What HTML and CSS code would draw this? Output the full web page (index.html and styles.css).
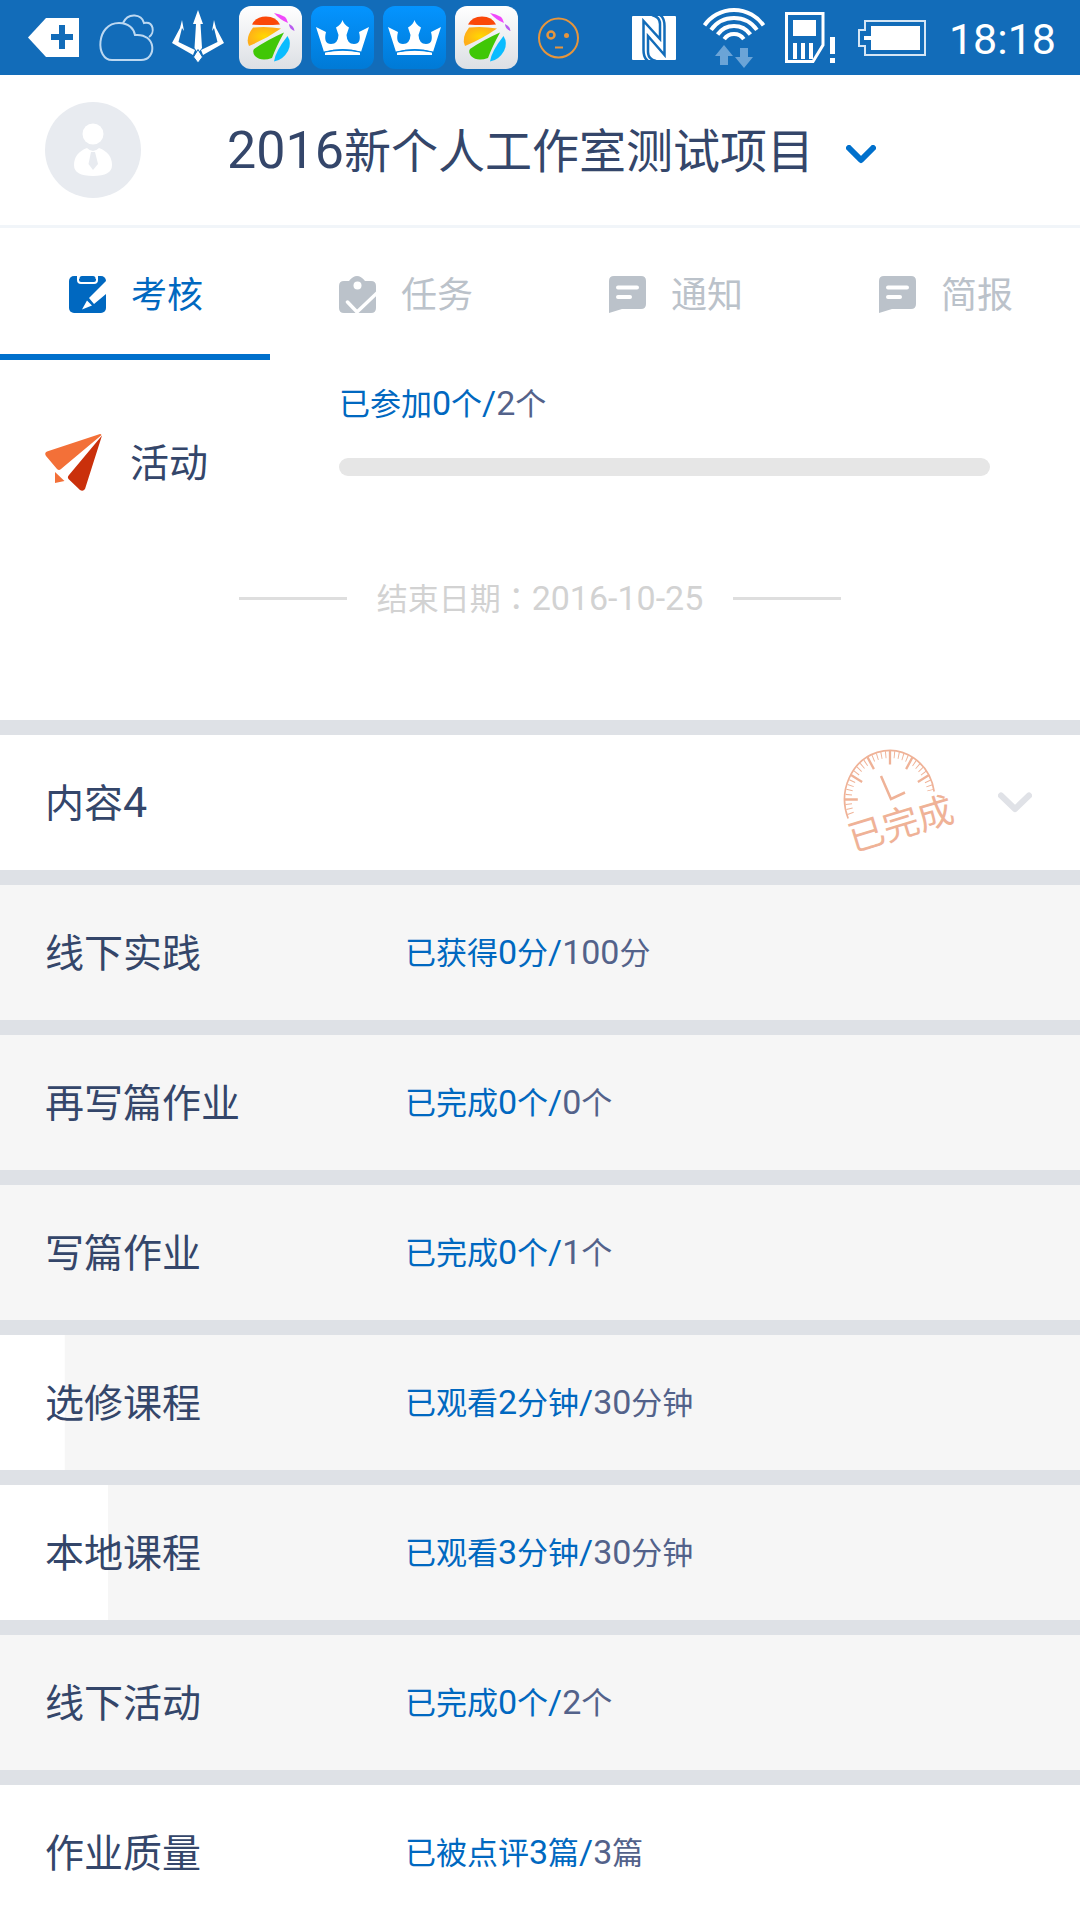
FILE: index.html
```html
<!DOCTYPE html>
<html lang="zh-CN">
<head>
<meta charset="utf-8">
<meta name="viewport" content="width=device-width, initial-scale=1">
<title>2016新个人工作室测试项目</title>
<link rel="stylesheet" href="styles.css">
</head>
<body>
<svg class="defs" width="0" height="0" aria-hidden="true">
  <defs>
    <linearGradient id="tile-light" x1="0" y1="0" x2="0" y2="1"><stop offset="0" stop-color="#ffffff"/><stop offset="1" stop-color="#dcdfe4"/></linearGradient>
    <linearGradient id="tile-blue" x1="0" y1="0" x2="0" y2="1"><stop offset="0" stop-color="#0494ff"/><stop offset="1" stop-color="#007ad6"/></linearGradient>
    <radialGradient id="ball-yellow"><stop offset="0" stop-color="#ffd800"/><stop offset="1" stop-color="#ffae1a"/></radialGradient>
    <symbol id="ball" viewBox="0 0 63 63">
      <rect width="63" height="63" rx="12" fill="url(#tile-light)"/>
      <path d="M13 18.500Q17 10.500 27 10.500T41 18.500Q27 19.500 13 18.500Z" fill="#fb4708"/>
      <path d="M35 7Q48 9 49 17Q41 14 35 7Z" fill="#f048fb"/>
      <path d="M50 18Q55 20 55.500 25Q50 23 50 18Z" fill="#b95cf0"/>
      <path d="M14 21.500Q28 20 42 22.500Q27 33 10 40Q6 32 14 21.500Z" fill="url(#ball-yellow)"/>
      <path d="M45 26.500Q28 34 15 43Q13 46 16 50Q22 56 33 52Q37 41 45 26.500Z" fill="#40c706"/>
      <path d="M48.500 30Q53 37 49 45Q44 54 35 55.500Q36 46 48.500 30Z" fill="#0abcff"/>
    </symbol>
    <symbol id="crown" viewBox="0 0 63 63">
      <rect width="63" height="63" rx="12" fill="url(#tile-blue)"/>
      <path d="M5 21L15 26Q12 38 20 38Q27 38 27.500 29L25 21.500Q30 19 31.500 14Q33 19 38 21.500L35.500 29Q36 38 43 38Q51 38 48 26L58 21L50 46Q32 40 13 46Z" fill="#fff"/>
      <path d="M14 49V46.500Q32 43 49 46.500V49Z" fill="#fff"/>
      <path d="M13 46Q32 41.500 50 46" fill="none" stroke="#0083e4" stroke-width="1"/>
    </symbol>
    <symbol id="message" viewBox="0 0 37 37">
      <path d="M5 0H32Q37 0 37 5V28Q37 33 32 33H13L0 37V5Q0 0 5 0Z" fill="currentColor"/>
      <path d="M9 11.500H28M9 21H21" stroke="#fff" stroke-width="4" stroke-linecap="round"/>
    </symbol>
  </defs>
</svg>

<div class="statusbar">
  <div class="notices">
    <svg class="notice" viewBox="0 0 63 63"><path d="M5 31.500L23 12H56V51H23Z" fill="#fff"/><path d="M28 31H50M39 19V43" stroke="#126cb9" stroke-width="6"/></svg>
    <svg class="notice" viewBox="0 0 63 63" fill="none" stroke="#bcd8f1" stroke-width="2"><path d="M17 54C0 54 1 17 24 17C34 17 39 23 40 29C62 27 62 54 46 54Z"/><path d="M28 17C33 6 47 8 49 17C59 15 60 27 54 31"/></svg>
    <svg class="notice" viewBox="0 0 63 63" fill="#fff"><path d="M31 4L36 18H33.500L35 42L31 47L27.500 42L29 18H26Z"/><path d="M15 14L17 25L15 22L11.500 36L28 44L26 49L5 37L13 22L13.500 20Z"/><path d="M47 14L45 25L47 22L50.500 36L34 44L36 49L57 37L49 22L48.500 20Z"/><path d="M31 43.500L35.500 51L31 57L26.500 51Z" stroke="#126cb9" stroke-width="1"/></svg>
    <svg class="notice"><use href="#ball"/></svg>
    <svg class="notice"><use href="#crown"/></svg>
    <svg class="notice"><use href="#crown"/></svg>
    <svg class="notice"><use href="#ball"/></svg>
    <svg class="notice" viewBox="0 0 63 63" fill="none" stroke="#e6953c" stroke-width="2"><circle cx="31.500" cy="32" r="19.500"/><circle cx="24" cy="29" r="3.500" stroke-width="2.500"/><circle cx="39.500" cy="29.500" r="2.500" fill="#e6953c" stroke="none"/><path d="M28 41.500H36"/></svg>
  </div>
  <div class="system">
    <svg width="51" height="44" viewBox="0 0 51 44"><rect width="44" height="44" rx="1" fill="#fff"/><path d="M20 -1Q28 1 28 8V23L11.500 5V34Q11.500 42 16 45M24 45Q16 43 16 36V20L32.500 39V10Q32.500 2 28 -1" fill="none" stroke="#126cb9" stroke-width="2.500"/></svg>
    <svg width="62" height="60" viewBox="0 0 62 60"><path d="M1.500 17.400A36 36 0 0 1 60.500 17.400M8.100 21.900A28 28 0 0 1 53.900 21.900M14.600 26.500A20 20 0 0 1 47.400 26.500M21.200 31.100A12 12 0 0 1 40.800 31.100" fill="none" stroke="#fff" stroke-width="4"/><path d="M21 37L30 48H25V57H17V48H12ZM37 40H45V49H50L41 60L32 49H37Z" fill="#6ba4d7"/></svg>
    <svg width="53" height="51" viewBox="0 0 53 51"><path d="M1.500 1.500H38V33L28 49.500H1.500Z" fill="none" stroke="#fff" stroke-width="3"/><path d="M8 8H31V24H8ZM8 31H12V47H8ZM16 31H20V47H16ZM24 31H28V47H24ZM45 25H50V42H45ZM45 46H50V51H45Z" fill="#fff"/></svg>
    <svg width="71" height="36" viewBox="0 0 71 36"><path d="M7 1H67V35H7V26H1V10H7Z" fill="none" stroke="#d5e6f5" stroke-width="2"/><path d="M13 6H62V30H13V20H6V16H13Z" fill="#fff"/></svg>
    <time class="clock">18:18</time>
  </div>
</div>

<header class="header">
  <svg class="avatar" viewBox="0 0 96 96" role="img" aria-label="头像"><circle cx="48" cy="48" r="48" fill="#e8ebf0"/><circle cx="48" cy="32" r="10.500" fill="#fff"/><path d="M42 46Q48 52 54 46Q67 51 67 63Q67 74 48 74T29 63Q29 51 42 46Z" fill="#fff"/><path d="M46 50H50L53 62L48 68L43.500 62Z" fill="#e8ebf0"/></svg>
  <button class="project" type="button">
    <span class="label"><span class="num">2016</span>新个人工作室测试项目</span>
    <svg class="project-arrow" width="30" height="19" viewBox="0 0 30 19"><path d="M3 3L15 15L27 3" fill="none" stroke="#0070cc" stroke-width="6" stroke-linecap="round" stroke-linejoin="round"/></svg>
  </button>
</header>

<nav class="tabs">
  <a class="tab active" href="#assess"><svg class="tab-icon" viewBox="0 0 37 37"><rect width="37" height="37" rx="5" fill="currentColor"/><path d="M9 -1V4Q9 7 12 7H25Q28 7 28 4V-1" fill="none" stroke="#fff" stroke-width="2"/><path d="M9 -1H28V3H9Z" fill="#fff"/><rect x="10.500" y="0" width="16" height="5" rx="2.500" fill="currentColor"/><path d="M20 22L37 5V18L25 28ZM13 33.500L18 24.500L23 29.500Z" fill="#fff"/></svg><span class="label">考核</span></a>
  <a class="tab" href="#tasks"><svg class="tab-icon" viewBox="0 0 37 37"><path d="M5 5H10Q18 -5 26 5H32Q37 5 37 10V32Q37 37 32 37H5Q0 37 0 32V10Q0 5 5 5Z" fill="currentColor"/><circle cx="18.500" cy="9.500" r="4" fill="#fff"/><path d="M8.500 26L18 36L38 17" fill="none" stroke="#fff" stroke-width="3.500" stroke-linecap="round"/></svg><span class="label">任务</span></a>
  <a class="tab" href="#notices"><svg class="tab-icon"><use href="#message"/></svg><span class="label">通知</span></a>
  <a class="tab" href="#briefs"><svg class="tab-icon"><use href="#message"/></svg><span class="label">简报</span></a>
</nav>

<main>
  <section class="activity" id="assess">
    <div class="activity-row">
      <h2 class="activity-name"><svg width="57" height="57" viewBox="0 0 57 57"><path d="M2 17.500L55 0Q57 0 56 1.500L16 35Q14 37 12 35L1 22Q-1 19 2 17.500Z" fill="#f37038"/><path d="M57 1.500L40 55Q38 58 35 56L23.500 45Q22 43 24 41Z" fill="#ca300b"/><path d="M10 38L19.500 47L10 49Z" fill="#f37038"/></svg><span class="label">活动</span></h2>
      <div class="activity-progress">
        <label class="status" for="joined"><span class="got">已参加<span class="num">0</span>个<span class="num">/</span></span><span class="num">2</span>个</label>
        <progress class="bar" id="joined" value="0" max="2"></progress>
      </div>
    </div>
    <p class="deadline"><span class="label">结束日期<span class="colon" lang="zh-Hant">：</span><span class="num">2016-10-25</span></span></p>
  </section>

  <div class="list">
    <button class="row full" type="button">
      <span class="name label">内容<span class="num">4</span></span>
      <svg class="stamp" width="120" height="116" viewBox="0 0 120 116" fill="none" stroke="#efb297">
        <g transform="translate(50 54.500) scale(.92 1)">
          <path d="M-45.500 19A49 49 0 1 1 48 -8" stroke-width="1.800"/>
          <path d="M-42.670 14.280A45 45 0 1 1 44.100 -8.970" stroke-width="7" pathLength="187" stroke-dasharray="1.300 4.700"/>
          <path d="M-49 0H-35M-42.400 -24.500L-30.300 -17.500M-24.500 -42.400L-17.500 -30.300M0 -49V-35M24.500 -42.400L17.500 -30.300M42.400 -24.500L30.300 -17.500" stroke-width="2.500"/>
        </g>
        <path d="M41 31L51 54L65 47.500" stroke-width="2.500"/>
        <text class="stamp-text" transform="translate(13 107) rotate(-17)" x="0" y="0">已完成</text>
      </svg>
      <svg width="34" height="21" viewBox="0 0 34 21"><path d="M3 3.500L17 17L31 3.500" fill="none" stroke="#e0e2e7" stroke-width="6" stroke-linecap="round" stroke-linejoin="round"/></svg>
    </button>
    <div class="row"><span class="name label">线下实践</span><span class="status"><span class="got">已获得<span class="num">0</span>分<span class="num">/</span></span><span class="num">100</span>分</span></div>
    <div class="row"><span class="name label">再写篇作业</span><span class="status"><span class="got">已完成<span class="num">0</span>个<span class="num">/</span></span><span class="num">0</span>个</span></div>
    <div class="row"><span class="name label">写篇作业</span><span class="status"><span class="got">已完成<span class="num">0</span>个<span class="num">/</span></span><span class="num">1</span>个</span></div>
    <div class="row" style="--done: 6%"><span class="name label">选修课程</span><span class="status"><span class="got">已观看<span class="num">2</span>分钟<span class="num">/</span></span><span class="num">30</span>分钟</span></div>
    <div class="row" style="--done: 10%"><span class="name label">本地课程</span><span class="status"><span class="got">已观看<span class="num">3</span>分钟<span class="num">/</span></span><span class="num">30</span>分钟</span></div>
    <div class="row"><span class="name label">线下活动</span><span class="status"><span class="got">已完成<span class="num">0</span>个<span class="num">/</span></span><span class="num">2</span>个</span></div>
    <div class="row full"><span class="name label">作业质量</span><span class="status"><span class="got">已被点评<span class="num">3</span>篇<span class="num">/</span></span><span class="num">3</span>篇</span></div>
  </div>
</main>
</body>
</html>
```

FILE: styles.css
```css
* {
  box-sizing: border-box;
}

body {
  margin: 0;
  background: #fff;
  color: #34466a;
  font-family: Roboto, "Noto Sans CJK SC", sans-serif;
}

svg {
  display: block;
  flex: none;
}

.defs {
  position: absolute;
}

button {
  border: 0;
  padding: 0;
  background: none;
  color: inherit;
  font: inherit;
  text-align: left;
}

.label {
  padding-top: 4px;
}

/* larger digits must not stretch the line they sit in */
.num {
  line-height: 0;
}

/* status bar */
.statusbar {
  display: flex;
  align-items: center;
  justify-content: space-between;
  height: 75px;
  padding: 0 24px 0 23px;
  background: #126cb9;
}

.notices {
  display: flex;
  gap: 9px;
}

.notice {
  width: 63px;
  height: 63px;
}

.system {
  display: flex;
  align-items: center;
  gap: 20px;
}

.clock {
  padding-top: 2px;
  color: #fff;
  font-size: 43px;
  line-height: 48px;
}

/* header */
.header {
  display: flex;
  align-items: center;
  gap: 86px;
  height: 153px;
  padding: 0 45px;
  border-bottom: 3px solid #f1f5f9;
}

.avatar {
  width: 96px;
  height: 96px;
}

.project {
  display: flex;
  align-items: center;
  gap: 32px;
  font-size: 47px;
  line-height: 60px;
  white-space: nowrap;
}

.project .num {
  font-size: 52px;
}

.project-arrow {
  margin-top: 8px;
}

/* tabs */
.tabs {
  display: grid;
  grid-template-columns: repeat(4, 1fr);
}

.tab {
  display: flex;
  align-items: center;
  justify-content: center;
  gap: 25px;
  height: 132px;
  padding: 6px 0 0 2px;
  border-bottom: 6px solid transparent;
  color: #bbc2ca;
  font-size: 36px;
  line-height: 48px;
  text-decoration: none;
}

.tab.active {
  border-color: #0070cc;
  color: #0068c0;
}

.tab-icon {
  width: 37px;
  height: 37px;
}

/* activity */
.activity {
  padding: 24px 90px 100px 45px;
}

.activity-row {
  display: flex;
}

.activity-name {
  display: flex;
  align-items: center;
  gap: 28px;
  flex: 0 0 294px;
  margin: 48px 0 0;
  font-size: 39px;
  font-weight: 400;
  line-height: 57px;
}

.activity-progress {
  display: flex;
  flex: 1;
  flex-direction: column;
  gap: 34px;
}

.bar {
  display: block;
  width: 100%;
  height: 18px;
  border: 0;
  border-radius: 9px;
  background: #e6e6e6;
  overflow: hidden;
  appearance: none;
}

.bar::-webkit-progress-bar {
  background: #e6e6e6;
}

.bar::-webkit-progress-value {
  background: #0070cc;
}

.status {
  padding-top: 2px;
  color: #53628a;
  font-size: 31px;
  line-height: 38px;
  white-space: nowrap;
}

.status .num,
.deadline .num {
  font-size: 34px;
}

.got {
  color: #0068c0;
}

.deadline {
  display: flex;
  align-items: center;
  justify-content: center;
  gap: 30px;
  margin: 83px -45px 0 0;
  color: #d2d2d2;
  font-size: 31px;
  line-height: 40px;
}

.deadline::before,
.deadline::after {
  width: 108px;
  height: 3px;
  background: #dedede;
  content: "";
}

.colon {
  font-family: "Noto Sans CJK TC", sans-serif;
  line-height: 0;
}

/* assessment list */
.list {
  display: flex;
  flex-direction: column;
  gap: 15px;
  padding-top: 15px;
  background: #dee1e6;
}

.row {
  --done: 0%;
  display: flex;
  align-items: center;
  height: 135px;
  padding: 0 48px 0 45px;
  background: linear-gradient(#fff, #fff) no-repeat 0 0 / var(--done) 100% #f6f6f6;
}

.row.full {
  background: #fff;
}

.name {
  flex: 0 0 360px;
  font-size: 39px;
  line-height: 57px;
}

.name .num {
  font-size: 43px;
}

.stamp {
  margin: 0 38px 0 auto;
}

.stamp-text {
  fill: #efb297;
  stroke: none;
  font-size: 36px;
  font-weight: 400;
}
```
